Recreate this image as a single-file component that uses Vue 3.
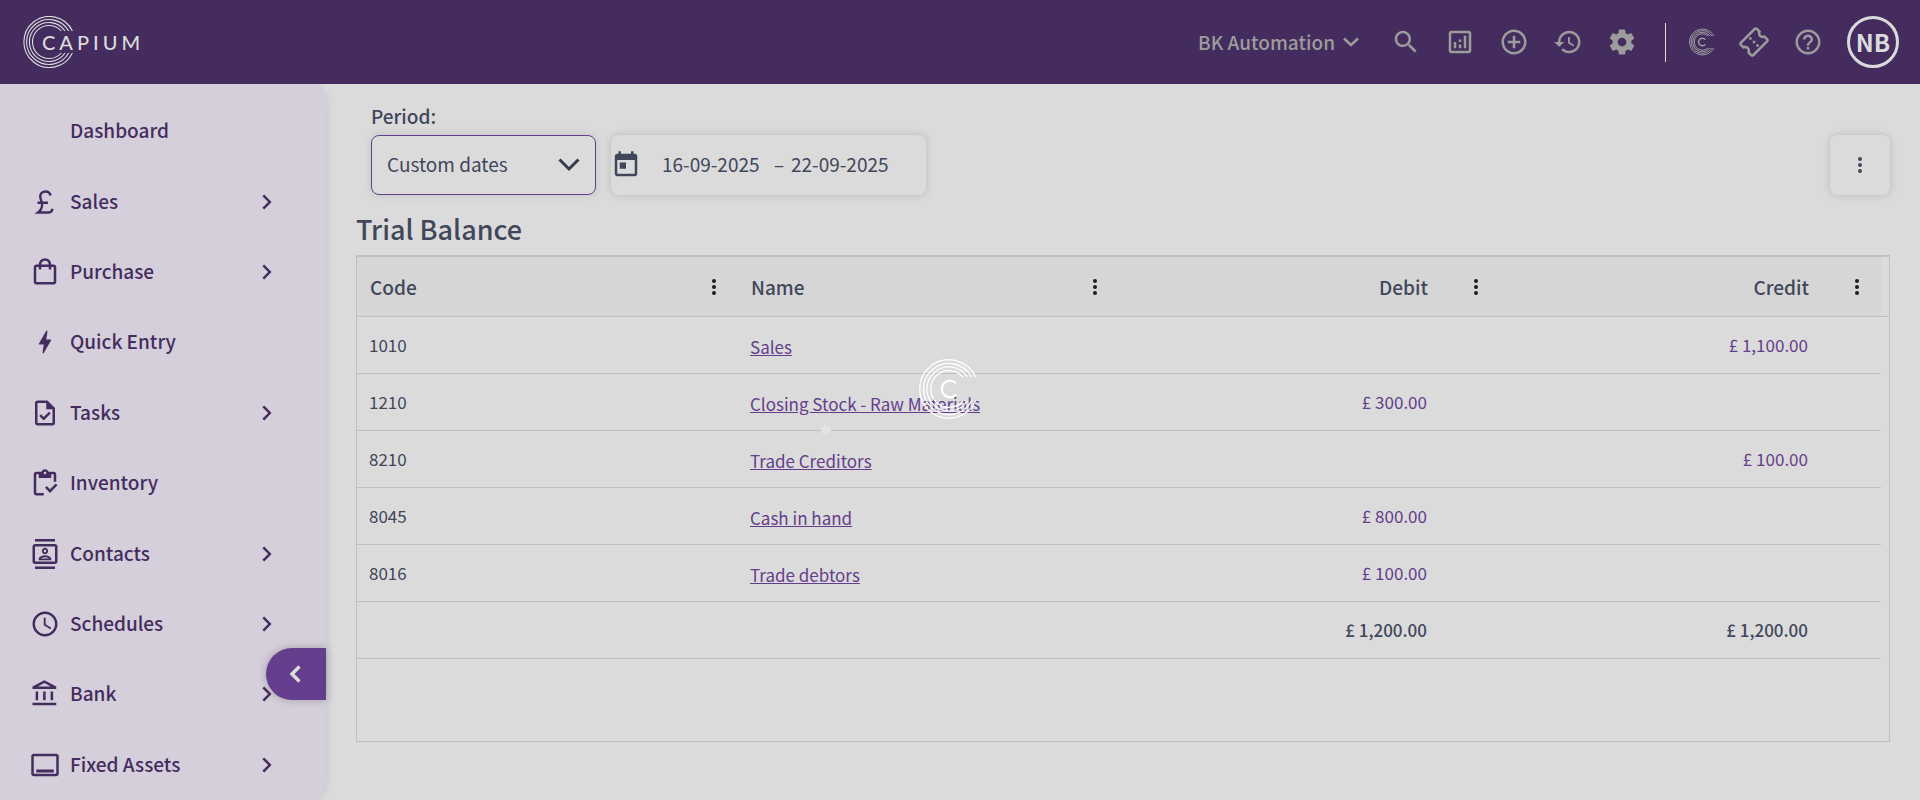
<script setup>
import { ref } from 'vue'

const period = ref('Custom dates')
const fromDate = ref('16-09-2025')
const toDate = ref('22-09-2025')

const menu = [
  { label: 'Dashboard', icon: '', more: false },
  { label: 'Sales', icon: 'pound', more: true },
  { label: 'Purchase', icon: 'bag', more: true },
  { label: 'Quick Entry', icon: 'bolt', more: false },
  { label: 'Tasks', icon: 'task', more: true },
  { label: 'Inventory', icon: 'inventory', more: false },
  { label: 'Contacts', icon: 'contacts', more: true },
  { label: 'Schedules', icon: 'clock', more: true },
  { label: 'Bank', icon: 'bank', more: true },
  { label: 'Fixed Assets', icon: 'assets', more: true },
]

const icons = {
  bag: 'M19 6h-2c0-2.76-2.24-5-5-5S7 3.24 7 6H5c-1.1 0-1.99.9-1.99 2L3 20c0 1.1.9 2 2 2h14c1.1 0 2-.9 2-2V8c0-1.100-.9-2-2-2zm-7-3c1.660 0 3 1.340 3 3H9c0-1.660 1.340-3 3-3zm7 17H5V8h2v2h2V8h6v2h2V8h2v12z',
  bolt: 'M11 21h-1l1-7H7.500c-.88 0-.33-.75-.31-.78C8.480 10.940 10.420 7.540 13.010 3h1l-1 7h3.510c.4 0 .62.19.4.66C12.970 17.550 11 21 11 21z',
  task: 'M14 2H6c-1.100 0-2 .9-2 2v16c0 1.100.89 2 1.990 2H18c1.100 0 2-.9 2-2V8l-6-6zM18 20H6V4h7v5h5v11zM10.940 18L7.400 14.460l1.410-1.410 2.120 2.120 4.240-4.240 1.410 1.410L10.940 18z',
  inventory: 'M5 5h2v3h10V5h2v6h2V5c0-1.100-.9-2-2-2h-4.180C14.400 1.840 13.300 1 12 1s-2.400.84-2.820 2H5c-1.100 0-2 .9-2 2v15c0 1.100.9 2 2 2h6v-2H5V5zm7-2c.55 0 1 .45 1 1s-.45 1-1 1-1-.45-1-1 .45-1 1-1zM20.600 12.400l-4.600 4.600-2.600-2.600L12 15.800l4 4.200 6-6.200z',
  contacts: 'M20 4H4c-1.100 0-2 .9-2 2v12c0 1.100.9 2 2 2h16c1.100 0 2-.9 2-2V6c0-1.100-.9-2-2-2zm0 14H4V6h16v12zM4 0h16v2H4zm0 22h16v2H4zm8-10c1.380 0 2.500-1.120 2.500-2.500S13.380 7 12 7 9.500 8.120 9.500 9.500 10.620 12 12 12zm0-3.500c.55 0 1 .45 1 1s-.45 1-1 1-1-.45-1-1 .45-1 1-1zm5 7.490C17 13.900 13.690 13 12 13s-5 .9-5 2.990V17h10v-1.010zm-8.190-.49c.61-.52 2.030-1 3.190-1 1.170 0 2.590.48 3.200 1H8.810z',
  clock: 'M11.990 2C6.470 2 2 6.480 2 12s4.470 10 9.990 10C17.520 22 22 17.520 22 12S17.520 2 11.990 2zM12 20c-4.420 0-8-3.580-8-8s3.580-8 8-8 8 3.580 8 8-3.580 8-8 8zm.5-13H11v6l5.250 3.150.75-1.230-4.500-2.670z',
  bank: 'M6.500 10h-2v7h2v-7zm6 0h-2v7h2v-7zm8.500 9H2v2h19v-2zm-2.500-9h-2v7h2v-7zm-7-6.740L16.710 6H6.290l5.210-2.740m0-2.260L2 6v2h19V6l-9.500-5z',
  assets: 'M5 15.500h14v2.500H5zM21 3H3c-1.110 0-2 .89-2 2v14c0 1.100.89 2 2 2h18c1.100 0 2-.9 2-2V5c0-1.110-.9-2-2-2zm0 16H3V5h18v14z',
}

const actions = [
  { label: 'Search', path: 'M15.500 14h-.79l-.28-.27C15.410 12.590 16 11.110 16 9.500 16 5.910 13.090 3 9.500 3S3 5.910 3 9.500 5.910 16 9.500 16c1.610 0 3.090-.59 4.230-1.570l.27.28v.79l5 4.990L20.490 19l-4.990-5zm-6 0C7.010 14 5 11.990 5 9.500S7.010 5 9.500 5 14 7.010 14 9.500 11.990 14 9.500 14z' },
  { label: 'Reports', path: 'M19 3H5c-1.100 0-2 .9-2 2v14c0 1.100.9 2 2 2h14c1.100 0 2-.9 2-2V5c0-1.100-.9-2-2-2zm0 16H5V5h14v14zM7 12h2v5H7zm8-5h2v10h-2zm-4 7h2v3h-2zm0-4h2v2h-2z' },
  { label: 'Add new', path: 'M13 7h-2v4H7v2h4v4h2v-4h4v-2h-4V7zm-1-5C6.480 2 2 6.480 2 12s4.480 10 10 10 10-4.480 10-10S17.520 2 12 2zm0 18c-4.410 0-8-3.590-8-8s3.590-8 8-8 8 3.590 8 8-3.590 8-8 8z' },
  { label: 'History', path: 'M13 3c-4.970 0-9 4.030-9 9H1l3.890 3.890.07.14L9 12H6c0-3.870 3.130-7 7-7s7 3.130 7 7-3.130 7-7 7c-1.930 0-3.680-.79-4.940-2.060l-1.420 1.420C8.270 19.990 10.510 21 13 21c4.970 0 9-4.030 9-9s-4.030-9-9-9zm-1 5v5l4.280 2.540.72-1.210-3.500-2.080V8H12z' },
  { label: 'Settings', path: 'M19.430 12.980c.04-.32.07-.64.07-.98s-.03-.66-.07-.98l2.110-1.650c.19-.15.24-.42.12-.64l-2-3.460c-.12-.22-.39-.3-.61-.22l-2.490 1c-.52-.4-1.080-.73-1.690-.98l-.38-2.650C14.460 2.180 14.250 2 14 2h-4c-.25 0-.46.18-.49.42l-.38 2.650c-.61.25-1.170.59-1.690.98l-2.490-1c-.23-.09-.49 0-.61.22l-2 3.460c-.13.22-.07.49.12.64l2.110 1.650c-.04.32-.07.65-.07.98s.03.66.07.98l-2.110 1.650c-.19.15-.24.42-.12.64l2 3.460c.12.22.39.3.61.22l2.490-1c.52.4 1.080.73 1.690.98l.38 2.650c.03.24.24.42.49.42h4c.25 0 .46-.18.49-.42l.38-2.650c.61-.25 1.170-.59 1.690-.98l2.490 1c.23.09.49 0 .61-.22l2-3.460c.12-.22.07-.49-.12-.64l-2.110-1.650zM12 15.500c-1.930 0-3.500-1.570-3.500-3.500s1.570-3.500 3.500-3.500 3.500 1.570 3.500 3.500-1.570 3.500-3.500 3.500z' },
]

const columns = [
  { label: 'Code', numeric: false },
  { label: 'Name', numeric: false },
  { label: 'Debit', numeric: true },
  { label: 'Credit', numeric: true },
]

const rows = [
  { code: '1010', name: 'Sales', debit: '', credit: '£ 1,100.00' },
  { code: '1210', name: 'Closing Stock - Raw Materials', debit: '£ 300.00', credit: '' },
  { code: '8210', name: 'Trade Creditors', debit: '', credit: '£ 100.00' },
  { code: '8045', name: 'Cash in hand', debit: '£ 800.00', credit: '' },
  { code: '8016', name: 'Trade debtors', debit: '£ 100.00', credit: '' },
]
</script>

<template>
  <div class="app">
    <header class="topbar">
      <a href="#" class="brand" aria-label="Capium">
        <svg class="brand-rings" viewBox="0 0 52 52" aria-hidden="true">
          <g fill="none" stroke="currentColor" stroke-width="1.1">
            <path d="M49.400 15A25.500 25.500 0 1 0 49.400 37" />
            <path d="M45.700 15A22.500 22.500 0 1 0 45.700 37" />
            <path d="M42 15A19.500 19.500 0 1 0 42 37" />
            <path d="M38.300 15A16.500 16.500 0 1 0 38.300 37" />
          </g>
        </svg>
        <span class="brand-name">CAPIUM</span>
      </a>
      <div class="tools">
        <button class="company" type="button">
          BK Automation
          <svg viewBox="0 0 16 10" class="company-arrow" aria-hidden="true"><path d="M1 1.500l7 6.500 7-6.500" /></svg>
        </button>
        <button v-for="a in actions" :key="a.label" class="tool" type="button" :aria-label="a.label">
          <svg viewBox="0 0 24 24" class="icon"><path :d="a.path" /></svg>
        </button>
        <span class="divider"></span>
        <button class="tool" type="button" aria-label="Capium apps">
          <svg viewBox="0 0 30 30" class="icon">
            <g fill="none" stroke="currentColor" stroke-width="1">
              <path d="M28.900 9A12.900 12.900 0 1 0 28.900 21" />
              <path d="M27 9A11.300 11.300 0 1 0 27 21" />
              <path d="M25 9A9.700 9.700 0 1 0 25 21" />
              <path d="M23 9A8.200 8.200 0 1 0 23 21" />
              <path d="M20.300 12.600A3.800 3.800 0 1 0 20.300 17.400" stroke-width="1.500" />
            </g>
          </svg>
        </button>
        <button class="tool" type="button" aria-label="Tickets">
          <svg viewBox="0 0 24 24" class="icon">
            <g transform="rotate(-45 12 12)">
              <path d="M22 10V6c0-1.110-.9-2-2-2H4c-1.100 0-1.990.89-1.990 2v4c1.100 0 1.990.9 1.990 2s-.89 2-2 2v4c0 1.100.9 2 2 2h16c1.100 0 2-.9 2-2v-4c-1.100 0-2-.9-2-2s.9-2 2-2zm-2-1.460c-1.190.69-2 1.990-2 3.460s.81 2.770 2 3.460V18H4v-2.540c1.190-.69 2-1.990 2-3.460 0-1.480-.8-2.770-1.990-3.460L4 6h16v2.540zM11 15h2v2h-2zm0-4h2v2h-2zm0-4h2v2h-2z" />
            </g>
          </svg>
        </button>
        <button class="tool" type="button" aria-label="Help">
          <svg viewBox="0 0 24 24" class="icon"><path d="M11 18h2v-2h-2v2zm1-16C6.480 2 2 6.480 2 12s4.480 10 10 10 10-4.480 10-10S17.520 2 12 2zm0 18c-4.410 0-8-3.590-8-8s3.590-8 8-8 8 3.590 8 8-3.590 8-8 8zm0-14c-2.210 0-4 1.790-4 4h2c0-1.100.9-2 2-2s2 .9 2 2c0 2-3 1.750-3 5h2c0-2.250 3-2.500 3-5 0-2.210-1.790-4-4-4z" /></svg>
        </button>
        <button class="avatar" type="button">NB</button>
      </div>
    </header>

    <div class="body">
      <nav class="sidebar" aria-label="Main menu">
        <a v-for="item in menu" :key="item.label" href="#" class="nav-item">
          <span class="nav-icon">
            <svg v-if="item.icon === 'pound'" viewBox="0 0 30 30" class="icon" aria-hidden="true">
              <path d="M20.700 8.500C19.700 5.500 18 4.500 15.700 4.500 12.300 4.500 10.200 6.700 10.200 9.600C10.200 12.400 12.100 14 12.100 17.500C12.100 21 10.700 23.500 8 25.500H18.500C21 25.500 22.200 24.300 22.300 21.800M7.500 15.800H18" fill="none" stroke="currentColor" stroke-width="2.400" />
            </svg>
            <svg v-else-if="item.icon" viewBox="0 0 24 24" class="icon" aria-hidden="true"><path :d="icons[item.icon]" /></svg>
          </span>
          <span class="nav-label">{{ item.label }}</span>
          <svg v-if="item.more" viewBox="0 0 10 16" class="nav-arrow" aria-hidden="true"><path d="M1.300 1.300L7.800 8l-6.500 6.700" /></svg>
        </a>
        <button class="collapse" type="button" aria-label="Collapse menu">
          <svg viewBox="0 0 12 18" class="collapse-arrow"><path d="M10.500 1.500L3 9l7.500 7.500" /></svg>
        </button>
      </nav>

      <main class="content">
        <div class="filters">
          <div class="period">
            <label for="period">Period:</label>
            <div class="select-box">
              <select id="period" v-model="period">
                <option>Custom dates</option>
              </select>
              <svg viewBox="0 0 22 14" class="select-arrow" aria-hidden="true"><path d="M1.500 1.500l9.500 9.500 9.500-9.500" /></svg>
            </div>
          </div>
          <div class="range">
            <svg viewBox="0 0 24 24" class="icon" aria-hidden="true"><path d="M19 3h-1V1h-2v2H8V1H6v2H5c-1.110 0-1.990.9-1.990 2L3 19c0 1.100.89 2 2 2h14c1.100 0 2-.9 2-2V5c0-1.100-.9-2-2-2zm0 16H5V8h14v11zM7 10h5v5H7z" /></svg>
            <input v-model="fromDate" class="date from" type="text" aria-label="Start date">
            <span class="dash">–</span>
            <input v-model="toDate" class="date" type="text" aria-label="End date">
          </div>
          <button class="more" type="button" aria-label="More options">
            <svg viewBox="0 0 4 16" class="dots"><circle cx="2" cy="2" r="2" /><circle cx="2" cy="8" r="2" /><circle cx="2" cy="14" r="2" /></svg>
          </button>
        </div>

        <h1>Trial Balance</h1>

        <div class="grid">
          <table>
            <thead>
              <tr>
                <th v-for="c in columns" :key="c.label" scope="col">
                  <div class="head" :class="{ numeric: c.numeric }">
                    <span>{{ c.label }}</span>
                    <button type="button" class="col-menu" :aria-label="c.label + ' column menu'">
                      <svg viewBox="0 0 4 16" class="dots"><circle cx="2" cy="2" r="2" /><circle cx="2" cy="8" r="2" /><circle cx="2" cy="14" r="2" /></svg>
                    </button>
                  </div>
                </th>
              </tr>
            </thead>
            <tbody>
              <tr v-for="r in rows" :key="r.code">
                <td>{{ r.code }}</td>
                <td class="name"><a href="#">{{ r.name }}</a></td>
                <td class="amount">{{ r.debit }}</td>
                <td class="amount">{{ r.credit }}</td>
              </tr>
            </tbody>
            <tfoot>
              <tr>
                <td></td>
                <td></td>
                <td class="amount">£ 1,200.00</td>
                <td class="amount">£ 1,200.00</td>
              </tr>
            </tfoot>
          </table>
        </div>
      </main>
    </div>

    <div class="loader" role="status" aria-label="Loading">
      <svg viewBox="0 0 60 60">
        <g fill="none" stroke="currentColor" stroke-width="1.300">
          <path d="M56.500 18A29.200 29.200 0 1 0 56.500 42" />
          <path d="M52.500 18A25.500 25.500 0 1 0 52.500 42" />
          <path d="M48.300 18A22 22 0 1 0 48.300 42" />
          <path d="M43.800 18A18.300 18.300 0 1 0 43.800 42" />
          <path d="M37 24.200A8.300 8.300 0 1 0 37 35.800" stroke-width="2.200" />
        </g>
      </svg>
      <span class="loader-dot"></span>
    </div>
  </div>
</template>

<style>
body {
  margin: 0;
  background: #dbdbdb;
}
</style>

<style scoped>
.app {
  display: flex;
  flex-direction: column;
  min-height: 100vh;
  background: #dbdbdb;
  color: #41475a;
  font-family: "Noto Sans CJK SC", "Noto Sans", sans-serif;
  font-size: 19px;
  line-height: 24px;
}
.app *,
.app {
  box-sizing: border-box;
}
button,
select,
input {
  margin: 0;
  padding: 0;
  border: 0;
  background: none;
  color: inherit;
  font: inherit;
}
a {
  color: inherit;
}
.icon {
  display: block;
  width: 30px;
  height: 30px;
  fill: currentColor;
}

.topbar {
  display: flex;
  justify-content: space-between;
  align-items: center;
  height: 84px;
  padding: 0 21px 0 23px;
  background: #442c5e;
  color: #dbdbdb;
}
.brand {
  display: flex;
  align-items: center;
  position: relative;
  padding-left: 19px;
  text-decoration: none;
}
.brand-rings {
  position: absolute;
  left: 0;
  width: 52px;
  height: 52px;
}
.brand-name {
  font-family: Lato, sans-serif;
  font-size: 20px;
  font-weight: 500;
  letter-spacing: 4px;
}
.tools {
  display: flex;
  align-items: center;
  gap: 24px;
}
.company {
  display: flex;
  align-items: center;
  gap: 8px;
  margin-right: 8px;
  color: #9c9c9c;
  font-weight: 500;
}
.company-arrow {
  width: 16px;
  height: 10px;
  fill: none;
  stroke: currentColor;
  stroke-width: 2.5;
}
.tool {
  color: #9c9c9c;
}
.divider {
  width: 1px;
  height: 39px;
  margin: 0 -5px 0 4px;
  background: #dbdbdb;
}
.avatar {
  width: 52px;
  height: 52px;
  border: 3px solid #dbdbdb;
  border-radius: 50%;
  font-size: 24px;
  font-weight: 700;
}

.body {
  display: flex;
  flex: 1;
}
.sidebar {
  position: relative;
  display: flex;
  flex-direction: column;
  flex: none;
  width: 326px;
  padding-top: 12px;
  background: #d5cfdb;
  border-radius: 0 20px 20px 0;
  box-shadow: 0 0 8px #bcc0cf;
  clip-path: inset(0 -12px 0 0);
  color: #442c5e;
}
.nav-item {
  display: flex;
  align-items: center;
  flex: 1;
  padding: 0 54px 0 30px;
  font-weight: 500;
  text-decoration: none;
}
.nav-icon {
  width: 40px;
}
.nav-label {
  flex: 1;
  padding-bottom: 2px;
}
.nav-arrow {
  width: 10px;
  height: 16px;
  fill: none;
  stroke: currentColor;
  stroke-width: 2.5;
}
.collapse {
  position: absolute;
  right: 0;
  bottom: 100px;
  display: flex;
  align-items: center;
  width: 60px;
  height: 52px;
  padding-left: 22px;
  border-radius: 26px 0 0 26px;
  background: #643e8c;
  color: #dbdbdb;
  box-shadow: 0 0 8px rgba(0, 0, 0, 0.25);
}
.collapse-arrow {
  width: 14px;
  height: 18px;
  fill: none;
  stroke: currentColor;
  stroke-width: 3.5;
}

.content {
  display: flex;
  flex-direction: column;
  flex: 1;
  min-width: 0;
  padding: 20px 30px 58px;
}
.filters {
  display: flex;
  align-items: flex-end;
  gap: 15px;
  padding-left: 15px;
}
.period label {
  display: block;
  margin-bottom: 7px;
  font-weight: 500;
}
.select-box {
  position: relative;
}
.select-box select {
  display: block;
  appearance: none;
  width: 225px;
  height: 60px;
  padding: 0 15px 2px;
  border: 1px solid #643e8c;
  border-radius: 8px;
  box-shadow: 0 0 8px rgba(0, 0, 0, 0.12);
}
.select-arrow {
  position: absolute;
  right: 16px;
  top: 23px;
  width: 22px;
  height: 14px;
  fill: none;
  stroke: #343b4d;
  stroke-width: 3;
  pointer-events: none;
}
.range,
.more {
  display: flex;
  align-items: center;
  height: 60px;
  border-radius: 8px;
  box-shadow: 0 0 8px rgba(0, 0, 0, 0.16);
}
.range {
  width: 315px;
}
.date,
.dash {
  padding-bottom: 2px;
}
.date {
  width: 105px;
}
.date.from {
  margin-left: 21px;
}
.dash {
  width: 24px;
  text-align: center;
}
.more {
  justify-content: center;
  width: 60px;
  margin-left: auto;
}
.dots {
  display: block;
  width: 4px;
  height: 16px;
  fill: currentColor;
}

h1 {
  margin: 16px 0 8px;
  font-size: 27px;
  font-weight: 500;
  line-height: 36px;
}
.grid {
  flex: 1;
  padding-right: 8px;
  border: 1px solid #c0c0c0;
  border-top-width: 2px;
}
table {
  width: 100%;
  table-layout: fixed;
  border-collapse: separate;
  border-spacing: 0;
}
th {
  position: relative;
  height: 60px;
  padding: 0 22px 0 13px;
  border-bottom: 1px solid #c0c0c0;
  background: #d6d6d6;
  font-weight: 500;
  text-align: left;
}
th:last-child::after {
  content: "";
  position: absolute;
  left: 100%;
  bottom: -1px;
  width: 8px;
  height: 1px;
  background: #c0c0c0;
}
.head {
  display: flex;
  justify-content: space-between;
  align-items: center;
}
.head.numeric {
  justify-content: flex-end;
  gap: 46px;
}
.col-menu {
  color: #1d1d1d;
}
td {
  height: 57px;
  padding: 0 12px;
  border-bottom: 1px solid #c0c0c0;
  font-size: 17px;
}
td.name {
  padding-top: 4px;
}
.name a {
  color: #643e8c;
  text-decoration: underline;
}
td.amount {
  padding-right: 73px;
  color: #643e8c;
  text-align: right;
}
tfoot td.amount {
  color: #41475a;
  font-weight: 500;
}

.loader {
  position: fixed;
  left: calc(50% - 41px);
  top: calc(50% - 41px);
  width: 60px;
  height: 60px;
  color: #fff;
  pointer-events: none;
}
.loader svg {
  display: block;
  width: 60px;
  height: 60px;
}
.loader-dot {
  position: absolute;
  left: -98px;
  top: 66px;
  width: 10px;
  height: 10px;
  border-radius: 50%;
  background: #e3e3e3;
}
</style>
